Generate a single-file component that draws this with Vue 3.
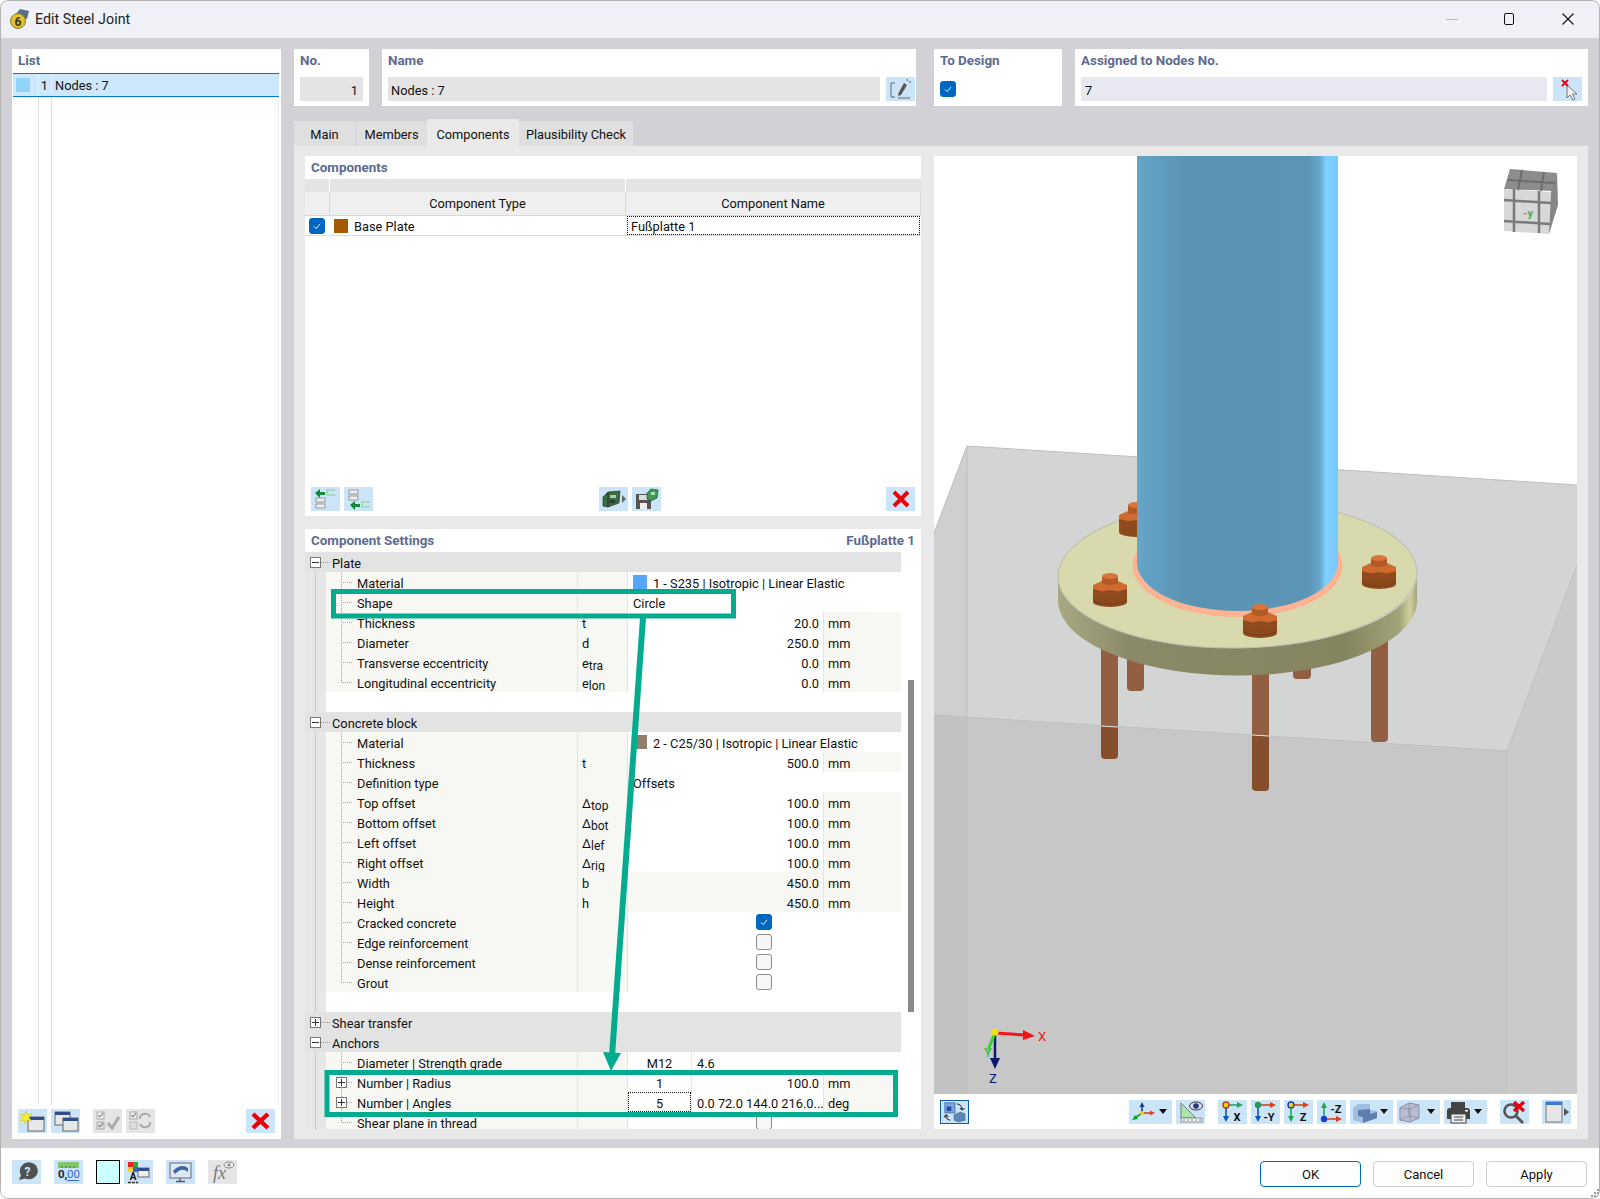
<script setup>
const g = (label, open) => ({ kind: 'group', label, open })
const blank = { kind: 'blank' }
const text = (label, value, swatch, last) => ({ kind: 'text', label, value, swatch, last })
const num = (label, sym, sub, value, tint, last) => ({ kind: 'num', label, sym, sub, value, tint, last, unit: 'mm' })
const chk = (label, on, last) => ({ kind: 'check', label, on, last })

const rows = [
  g('Plate', true),
  text('Material', '1 - S235 | Isotropic | Linear Elastic', '#56a7fb'),
  text('Shape', 'Circle'),
  num('Thickness', 't', '', '20.0'),
  num('Diameter', 'd', '', '250.0'),
  num('Transverse eccentricity', 'e', 'tra', '0.0'),
  num('Longitudinal eccentricity', 'e', 'lon', '0.0', false, true),
  blank,
  g('Concrete block', true),
  text('Material', '2 - C25/30 | Isotropic | Linear Elastic', '#8f7f6c'),
  num('Thickness', 't', '', '500.0'),
  text('Definition type', 'Offsets'),
  num('Top offset', 'Δ', 'top', '100.0'),
  num('Bottom offset', 'Δ', 'bot', '100.0'),
  num('Left offset', 'Δ', 'lef', '100.0'),
  num('Right offset', 'Δ', 'rig', '100.0'),
  num('Width', 'b', '', '450.0', true),
  num('Height', 'h', '', '450.0', true),
  chk('Cracked concrete', true),
  chk('Edge reinforcement', false),
  chk('Dense reinforcement', false),
  chk('Grout', false, true),
  blank,
  g('Shear transfer', false),
  g('Anchors', true),
  { kind: 'pair', label: 'Diameter | Strength grade', v1: 'M12', v2: '4.6', left: true },
  { kind: 'pair', label: 'Number | Radius', v1: '1', v2: '100.0', unit: 'mm', plus: true },
  { kind: 'pair', label: 'Number | Angles', v1: '5', v2: '0.0 72.0 144.0 216.0...', unit: 'deg', plus: true, focus: true, left: true },
  chk('Shear plane in thread', false, true)
]

const nuts = [
  { x: 1110, y: 573 },
  { x: 1260, y: 604 },
  { x: 1379, y: 555 }
]
</script>

<template>
  <div class="window">
    <header class="titlebar">
      <svg class="appicon" width="22" height="22" viewBox="0 0 22 22">
        <path d="M5 8 L11 1 L20 3 L18 11 Z" fill="#5a6e8c" />
        <circle cx="9" cy="13" r="7.5" fill="#e5c02c" stroke="#8a7a3a" />
        <text x="9" y="17.5" text-anchor="middle" class="ic-bold" font-size="12" fill="#3a3a20">6</text>
      </svg>
      <span class="title">Edit Steel Joint</span>
      <div class="winctl">
        <span class="minimize"></span>
        <span class="maximize"></span>
        <svg width="12" height="12" viewBox="0 0 12 12"><path d="M0.5 0.5 L11.5 11.5 M11.5 0.5 L0.5 11.5" stroke="#111" stroke-width="1.1" /></svg>
      </div>
    </header>

    <main class="content">
      <aside class="listpanel">
        <div class="plabel">List</div>
        <div class="listrow">
          <span class="listswatch"></span>
          <span class="listno">1</span>
          <span class="listtext">Nodes : 7</span>
        </div>
        <div class="listbody"></div>
        <div class="listtools">
          <button class="tb">
            <svg viewBox="0 0 29 24"><rect x="10" y="8" width="16" height="14" fill="#e8e8e8" stroke="#666" /><rect x="10" y="8" width="16" height="3" fill="#2f4c8c" /><path d="M8 2 L9.5 6 L14 5 L11 8.5 L13.5 12 L9 11 L7 15 L6 11 L2 12 L4.5 8.5 L2 5 L6.5 6 Z" fill="#f6ee30" stroke="#c9b820" stroke-width=".5" /></svg>
          </button>
          <button class="tb">
            <svg viewBox="0 0 29 24"><rect x="4" y="3" width="15" height="13" fill="#e8e8e8" stroke="#666" /><rect x="4" y="3" width="15" height="3" fill="#2f4c8c" /><rect x="12" y="9" width="15" height="13" fill="#e8e8e8" stroke="#666" /><rect x="12" y="9" width="15" height="3" fill="#2f4c8c" /></svg>
          </button>
          <button class="tb dis m13">
            <svg viewBox="0 0 29 24"><rect x="4" y="3" width="7" height="7" fill="#eee" stroke="#aaa" /><rect x="4" y="13" width="7" height="7" fill="#ddd" stroke="#aaa" /><path d="M5.5 6 L7 8 L10 4 M5.5 16 L7 18 L10 14" stroke="#666" fill="none" /><path d="M15 14 L19 19 L26 8" stroke="#aaa" stroke-width="3" fill="none" /></svg>
          </button>
          <button class="tb dis">
            <svg viewBox="0 0 29 24"><rect x="4" y="3" width="7" height="7" fill="#eee" stroke="#aaa" /><rect x="4" y="13" width="7" height="7" fill="#ddd" stroke="#bbb" /><path d="M5.5 6 L7 8 L10 4" stroke="#666" fill="none" /><path d="M14 10 A5 4 0 0 1 24 8 M24 13 A5 4 0 0 1 14 15" stroke="#aaa" stroke-width="2" fill="none" /></svg>
          </button>
          <span class="flex1"></span>
          <button class="tb">
            <svg viewBox="0 0 29 24"><path d="M7 5 L22 19 M22 5 L7 19" stroke="#e8000c" stroke-width="4.4" /></svg>
          </button>
        </div>
      </aside>

      <section class="rightcol">
        <div class="toprow">
          <div class="pbox w-no">
            <div class="plabel">No.</div>
            <div class="field gray right">1</div>
          </div>
          <div class="pbox w-name">
            <div class="plabel">Name</div>
            <div class="fieldrow namerow">
              <div class="field gray grow">Nodes : 7</div>
              <button class="tb">
                <svg viewBox="0 0 29 24"><path d="M9 6 H5 V20 H9 M12 21 H24" stroke="#666" fill="none" /><path d="M18 6 L21 8 L15 18 L12 19 L12.5 16 Z" fill="#555" /><path d="M21 2 L21.5 4 M23 5 L25 5" stroke="#555" /></svg>
              </button>
            </div>
          </div>
          <div class="pbox w-design">
            <div class="plabel">To Design</div>
            <span class="check on designchk"><svg viewBox="0 0 16 16"><path d="M4.5 8.5 L7 11 L11.5 5.5" stroke="#fff" fill="none" /></svg></span>
          </div>
          <div class="pbox w-assigned">
            <div class="plabel">Assigned to Nodes No.</div>
            <div class="fieldrow">
              <div class="field lav grow">7</div>
              <button class="tb">
                <svg viewBox="0 0 29 24"><path d="M12 9 L12 22 L15 19 L18 24 L20 23 L17.5 18 L22 18 Z" fill="#eee" stroke="#777" transform="translate(2 -1)" /><path d="M9 3 L15 9 M15 3 L9 9" stroke="#e8000c" stroke-width="1.8" /></svg>
              </button>
            </div>
          </div>
        </div>

        <nav class="tabs">
          <span class="tab t1">Main</span>
          <span class="tab t2">Members</span>
          <span class="tab t3 active">Components</span>
          <span class="tab t4">Plausibility Check</span>
        </nav>

        <div class="tabbody">
          <div class="leftstack">
            <section class="comps">
              <div class="plabel">Components</div>
              <div class="band"><i class="c1"></i><i class="c2"></i><i class="c3"></i></div>
              <div class="thead">
                <span class="c1"></span>
                <span class="c2">Component Type</span>
                <span class="c3">Component Name</span>
              </div>
              <div class="trow">
                <span class="c1 center chkcell"><span class="check on"><svg viewBox="0 0 16 16"><path d="M4.5 8.5 L7 11 L11.5 5.5" stroke="#fff" fill="none" /></svg></span></span>
                <span class="c2 typecell"><i class="compswatch"></i><span class="typetext">Base Plate</span></span>
                <span class="c3 namecell">Fußplatte 1</span>
              </div>
              <div class="flex1"></div>
              <div class="comptools">
                <button class="tb">
                  <svg viewBox="0 0 29 24"><rect x="5" y="11" width="9" height="4" fill="#eee" stroke="#999" /><rect x="5" y="17" width="9" height="4" fill="#eee" stroke="#999" /><path d="M4 6 L9 2 V5 H14 V8 H9 V11 Z" fill="#0f8a3c" /><path d="M24 3 H16 V8 H24" stroke="#9ad6b0" stroke-width="1.5" fill="none" /></svg>
                </button>
                <button class="tb">
                  <svg viewBox="0 0 29 24"><rect x="5" y="3" width="9" height="4" fill="#eee" stroke="#999" /><rect x="5" y="9" width="9" height="4" fill="#eee" stroke="#999" /><path d="M6 18 L11 14 V17 H16 V20 H11 V23 Z" fill="#0f8a3c" /><path d="M26 15 H18 V20 H26" stroke="#9ad6b0" stroke-width="1.5" fill="none" /></svg>
                </button>
                <span class="flex1"></span>
                <button class="tb">
                  <svg viewBox="0 0 29 24"><path d="M4 10 L9 5 L21 4 L20 16 L9 20 L4 19 Z" fill="#3a6a42" stroke="#2b3a2e" stroke-width=".7" /><path d="M9 5 L9 20" stroke="#1f2a20" /><rect x="11" y="8" width="6" height="3" fill="#9fd4a9" /><rect x="11" y="13" width="5" height="3" fill="#2b3a2e" /><path d="M23 8 L27 12 L23 16 Z" fill="#666" /></svg>
                </button>
                <button class="tb">
                  <svg viewBox="0 0 29 24"><path d="M4 7 H19 V22 H4 Z" fill="#555" /><rect x="7" y="8" width="9" height="5" fill="#ddd" /><rect x="8" y="16" width="7" height="6" fill="#eee" /><path d="M15 6 L19 2 L26 3 L25 11 L19 14 L15 12 Z" fill="#3e9a50" stroke="#234" stroke-width=".6" /><rect x="19" y="5" width="4" height="3" fill="#a9dcb4" /></svg>
                </button>
                <span class="flex1"></span>
                <button class="tb">
                  <svg viewBox="0 0 29 24"><path d="M8 5 L22 19 M22 5 L8 19" stroke="#e8000c" stroke-width="4" /></svg>
                </button>
              </div>
            </section>

            <section class="settings">
              <div class="sethead">
                <span class="plabel flush">Component Settings</span>
                <span class="plabel flush">Fußplatte 1</span>
              </div>
              <div class="setbody">
                <div class="grid">
                  <div v-for="(row, i) in rows" :key="i" class="row" :class="'k-' + row.kind">
                    <template v-if="row.kind === 'group'">
                      <span class="gut"><i class="box" :class="{ closed: !row.open }"></i></span>
                      <span class="grouplabel"><i class="dash"></i>{{ row.label }}</span>
                    </template>
                    <template v-else-if="row.kind === 'blank'">
                      <span class="gut"></span>
                    </template>
                    <template v-else>
                      <span class="gut"></span>
                      <span class="name">
                        <i class="twig" :class="{ last: row.last, plus: row.plus }"><i v-if="row.plus" class="box closed"></i></i>
                        {{ row.label }}
                      </span>
                      <span class="sym">{{ row.sym }}<small v-if="row.sub">{{ row.sub }}</small></span>
                      <span v-if="row.kind === 'text'" class="val">
                        <i v-if="row.swatch" class="matswatch" :style="{ background: row.swatch }"></i>{{ row.value }}
                      </span>
                      <template v-if="row.kind === 'num'">
                        <span class="numv" :class="{ tint: row.tint }">{{ row.value }}</span>
                        <span class="unit">{{ row.unit }}</span>
                      </template>
                      <span v-if="row.kind === 'check'" class="val center">
                        <span class="check" :class="{ on: row.on }"><svg v-if="row.on" viewBox="0 0 16 16"><path d="M4.5 8.5 L7 11 L11.5 5.5" stroke="#fff" fill="none" /></svg></span>
                      </span>
                      <template v-if="row.kind === 'pair'">
                        <span class="v1" :class="{ focus: row.focus }">{{ row.v1 }}</span>
                        <span class="v2" :class="{ lefted: row.left }">{{ row.v2 }}</span>
                        <span class="unit" :class="{ plain: !row.unit }">{{ row.unit }}</span>
                      </template>
                    </template>
                  </div>
                </div>
                <div class="scroll"><i></i></div>
              </div>
            </section>
          </div>

          <section class="viewer">
            <svg class="scene" viewBox="934 156 643 938" preserveAspectRatio="none">
              <defs>
                <linearGradient id="col" x1="0" x2="1" y1="0" y2="0">
                  <stop offset="0" stop-color="#66a5c8" />
                  <stop offset=".12" stop-color="#5f9cbd" />
                  <stop offset=".25" stop-color="#5a93b2" />
                  <stop offset=".85" stop-color="#5b94b4" />
                  <stop offset=".91" stop-color="#66a6cc" />
                  <stop offset=".94" stop-color="#7fd0ff" />
                  <stop offset="1" stop-color="#78c8fa" />
                </linearGradient>
                <linearGradient id="side" x1="0" x2="1" y1="0" y2="0">
                  <stop offset="0" stop-color="#a8a983" />
                  <stop offset=".2" stop-color="#8a8a68" />
                  <stop offset=".8" stop-color="#84845f" />
                  <stop offset=".95" stop-color="#a3a37a" />
                  <stop offset=".98" stop-color="#cfcf9f" />
                  <stop offset="1" stop-color="#a5a57d" />
                </linearGradient>
              </defs>
              <rect x="934" y="156" width="643" height="938" fill="#fff" />
              <polygon points="967,446 1577,485 1577,565 1507,751 934,715 934,533" fill="#d3d5d5" />
              <polygon points="967,446 934,533 934,715 967,717" fill="#cdcfd0" />
              <polygon points="934,715 1507,751 1507,1094 934,1094" fill="#c7c7c7" />
              <polygon points="934,715 967,717 967,1094 934,1094" fill="#c2c2c2" />
              <polygon points="1507,751 1577,565 1577,1094 1507,1094" fill="#cacaca" />
              <path d="M967 446 L1577 485 M967 446 L934 533 M934 715 L1507 751 L1577 565 M1507 751 V1094 M967 446 V1094" stroke="#bdbfbf" stroke-width="1" fill="none" />

              <g>
                <rect x="1127" y="650" width="17" height="41" rx="4" fill="#925f42" />
                <rect x="1293" y="650" width="18" height="29" rx="4" fill="#925f42" />
                <rect x="1371" y="630" width="17" height="112" rx="4" fill="#925f42" />
                <rect x="1101" y="640" width="17" height="119" rx="4" fill="#854f2d" />
                <polygon points="1101,640 1118,640 1118,727 1101,726" fill="#925f42" />
                <rect x="1252" y="660" width="17" height="131" rx="4" fill="#854f2d" />
                <polygon points="1252,660 1269,660 1269,736 1252,735" fill="#925f42" />
                <path d="M1101 726 L1118 727 M1252 735 L1269 736" stroke="#e4e4e4" stroke-width="1" />
              </g>

              <path d="M1058 577 A179.5 73 0 0 0 1417 572 V598 A179.5 75 0 0 1 1058 603 Z" fill="url(#side)" />
              <ellipse cx="1237.5" cy="574.5" rx="179.5" ry="73.5" fill="#d8d9ad" stroke="#bcbdb0" transform="rotate(-0.8 1237.5 574.5)" />

              <g transform="translate(1136 503)">
                <rect x="-17" y="15" width="34" height="14" fill="#8f4b1e" />
                <ellipse cx="0" cy="29" rx="17" ry="5" fill="#8c4a1c" />
                <polygon points="-17,12 -8,8 8,8 17,12 17,16 8,18 0,17 -8,18 -17,16" fill="#cf6a30" />
                <rect x="-8" y="2" width="16" height="9" fill="#b25a26" />
                <ellipse cx="0" cy="2" rx="8" ry="3" fill="#d9743a" />
              </g>

              <ellipse cx="1237.5" cy="566" rx="105" ry="51" fill="#fdb392" />
              <path d="M1142 590 L1147 580 M1172 606 L1177 598 M1205 615 L1206 607 M1246 617 V609 M1299 608 L1296 600 M1329 592 L1324 584" stroke="#e3c9bb" stroke-width="1" />
              <path d="M1137 156 V563 A100.5 48 0 0 0 1338 563 V156 Z" fill="url(#col)" />

              <g v-for="n in nuts" :key="n.x" :transform="`translate(${n.x} ${n.y})`">
                <rect x="-17" y="14" width="34" height="15" fill="#8f4b1e" />
                <ellipse cx="0" cy="29" rx="17" ry="5" fill="#8c4a1c" />
                <path d="M-17 26 A17 5 0 0 0 17 26" stroke="#6f3814" fill="none" stroke-width=".8" />
                <polygon points="-17,12 -8,8 8,8 17,12 17,16 8,18.5 0,17 -8,18.5 -17,16" fill="#cf6a30" />
                <path d="M-8 9 A8 3 0 0 0 8 9 V3 H-8 Z" fill="#b25a26" />
                <ellipse cx="0" cy="3" rx="8" ry="3" fill="#d9743a" />
              </g>

              <g>
                <polygon points="1510,169 1557,173 1553,191 1504,189" fill="#8c8c8c" />
                <polygon points="1504,189 1551,192 1549,234 1504,231" fill="#d8d8d8" />
                <polygon points="1551,192 1557,173 1558,205 1549,234" fill="#868686" />
                <path d="M1514 189 V232 M1539 191 V233 M1504 200 L1551 203 M1504 221 L1550 224" stroke="#7a7a7a" stroke-width="2.5" fill="none" />
                <path d="M1508 180 L1555 183 M1522 170 L1518 190 M1544 172 L1541 191" stroke="#6c6c6c" stroke-width="1.8" fill="none" />
                <text x="1528" y="217" text-anchor="middle" font-size="11" class="ic-bold" fill="#46b04a">-y</text>
              </g>

              <g>
                <path d="M995 1032 V1060" stroke="#0c1a6e" stroke-width="2.5" />
                <polygon points="990,1058 1000,1058 995,1069" fill="#0c1a6e" />
                <path d="M995 1033 L988 1050" stroke="#35d52e" stroke-width="3" />
                <path d="M996 1033 L1025 1035" stroke="#f0141c" stroke-width="3" />
                <polygon points="1023,1030 1035,1036 1023,1040" fill="#f0141c" />
                <circle cx="995" cy="1032" r="3.5" fill="#ede11d" />
                <text x="1038" y="1041" font-size="13" class="ic-reg" fill="#f0141c">X</text>
                <text x="984" y="1057" font-size="13" class="ic-reg" fill="#22c11f">Y</text>
                <text x="989" y="1083" font-size="13" class="ic-reg" fill="#0c1a6e">Z</text>
              </g>
            </svg>

            <div class="viewtools">
              <button class="tb toggled">
                <svg viewBox="0 0 29 24"><rect x="4" y="2" width="11" height="11" fill="#7aa4e2" stroke="#4a74b8" /><rect x="6" y="6" width="5" height="5" fill="#234a94" /><path d="M17 3 A7 7 0 0 1 23 10 M23 10 L20.5 7.5 M23 10 L25.5 8 M5 15 A6 6 0 0 0 10 21 M5 15 L3 18 M5 15 L8 17" stroke="#333" stroke-width="1.2" fill="none" /><path d="M14 15 L21 12 L26 14 V21 L19 23 L14 21 Z" fill="#5e86b4" stroke="#3a5a88" stroke-width=".5" /></svg>
              </button>
              <span class="flex1"></span>
              <button class="tb wide">
                <svg viewBox="0 0 43 24"><path d="M13 13 V4" stroke="#0f3fb0" stroke-width="1.6" /><polygon points="10.5,7 15.5,7 13,2" fill="#0f3fb0" /><path d="M13 13 H23" stroke="#d8431a" stroke-width="1.6" /><polygon points="21,10.5 21,15.5 26,13" fill="#d8431a" /><path d="M13 13 L6 18" stroke="#169a30" stroke-width="1.6" /><polygon points="3,20 9,19 6,15" fill="#169a30" /><circle cx="13" cy="13" r="2" fill="#e8d21c" /><polygon points="30,9 38,9 34,14" fill="#111" /></svg>
              </button>
              <button class="tb ml4">
                <svg viewBox="0 0 29 24"><polygon points="5,3 5,18 20,18" fill="#a9e6a8" stroke="#777" /><rect x="5" y="18" width="21" height="4" fill="#eee" stroke="#777" stroke-width=".7" /><path d="M8 21 V19 M12 21 V19 M16 21 V19 M20 21 V19 M24 21 V19" stroke="#777" stroke-width=".7" /><ellipse cx="20" cy="6" rx="6.5" ry="4" fill="#dde" stroke="#334" /><circle cx="20" cy="6" r="2.8" fill="#2a3a78" /></svg>
              </button>
              <button class="tb ml13">
                <svg viewBox="0 0 29 24"><circle cx="8" cy="5" r="3" fill="#e8d21c" stroke="#c43a1a" stroke-width="1.4" /><path d="M11 5 H20" stroke="#1ea65a" stroke-width="1.6" /><polygon points="19,2 19,8 25,5" fill="#1ea65a" /><path d="M8 8 V18" stroke="#0f52c0" stroke-width="1.6" /><polygon points="5,16 11,16 8,22" fill="#0f52c0" /><text x="19" y="21" font-size="11" class="ic-bold" text-anchor="middle" fill="#111">X</text></svg>
              </button>
              <button class="tb ml4">
                <svg viewBox="0 0 29 24"><circle cx="7" cy="5" r="3.2" fill="#1f9a50" /><path d="M10 5 H20" stroke="#d8431a" stroke-width="1.6" /><polygon points="19,2 19,8 25,5" fill="#d8431a" /><path d="M7 8 V18" stroke="#0f52c0" stroke-width="1.6" /><polygon points="4,16 10,16 7,22" fill="#0f52c0" /><text x="18" y="21" font-size="11" class="ic-bold" text-anchor="middle" fill="#111">-Y</text></svg>
              </button>
              <button class="tb ml4">
                <svg viewBox="0 0 29 24"><circle cx="7" cy="5" r="3" fill="#e8d21c" stroke="#1240c0" stroke-width="1.4" /><path d="M10 5 H20" stroke="#d8431a" stroke-width="1.6" /><polygon points="19,2 19,8 25,5" fill="#d8431a" /><path d="M7 8 V18" stroke="#1ea65a" stroke-width="1.6" /><polygon points="4,16 10,16 7,22" fill="#1ea65a" /><text x="19" y="21" font-size="11" class="ic-bold" text-anchor="middle" fill="#111">Z</text></svg>
              </button>
              <button class="tb ml4">
                <svg viewBox="0 0 29 24"><circle cx="7" cy="19" r="3.2" fill="#0f42d0" /><path d="M10 19 H20" stroke="#d8431a" stroke-width="1.6" /><polygon points="19,16 19,22 25,19" fill="#d8431a" /><path d="M7 16 V7" stroke="#1ea65a" stroke-width="1.6" /><polygon points="4,8 10,8 7,2" fill="#1ea65a" /><text x="19" y="13" font-size="11" class="ic-bold" text-anchor="middle" fill="#111">-Z</text></svg>
              </button>
              <button class="tb wide ml4">
                <svg viewBox="0 0 43 24"><path d="M3 8 L8 4 L20 4 V10 L27 11 V18 L13 23 L3 20 Z" fill="#9cbfe2" /><path d="M8 10 L20 9 V14 L27 12 V18 L13 23 V17 L8 16 Z" fill="#5e7fae" /><polygon points="30,9 38,9 34,14" fill="#111" /></svg>
              </button>
              <button class="tb wide ml4">
                <svg viewBox="0 0 43 24"><path d="M3 8 L12 3 L22 5 V18 L13 22 L3 20 Z" fill="#b9bdd2" stroke="#8a8fa8" /><path d="M3 8 L13 9 L22 5 M13 9 V22 M3 20 L12 16 L22 18 M12 3 V16" stroke="#8a8fa8" fill="none" stroke-width=".8" /><polygon points="30,9 38,9 34,14" fill="#111" /></svg>
              </button>
              <button class="tb wide ml4">
                <svg viewBox="0 0 43 24"><rect x="7" y="2" width="14" height="6" fill="#444" /><path d="M3 11 A3 3 0 0 1 6 8 H23 A3 3 0 0 1 26 11 V19 H3 Z" fill="#444" /><rect x="7" y="14" width="15" height="9" fill="#eee" stroke="#444" /><path d="M10 17 H19 M10 20 H19" stroke="#444" /><rect x="21" y="10" width="3" height="1.5" fill="#fff" /><polygon points="30,9 38,9 34,14" fill="#111" /></svg>
              </button>
              <button class="tb ml13">
                <svg viewBox="0 0 29 24"><circle cx="11" cy="11" r="6.5" fill="none" stroke="#555" stroke-width="2.6" /><path d="M16 16 L23 23" stroke="#555" stroke-width="2.8" /><path d="M14 2 L24 11 M24 2 L14 11" stroke="#e8000c" stroke-width="3.4" /></svg>
              </button>
              <button class="tb ml13">
                <svg viewBox="0 0 29 24"><rect x="4" y="2" width="16" height="20" fill="#e6e6e6" stroke="#777" /><rect x="4" y="2" width="16" height="3" fill="#3c78d8" /><polygon points="22,8 27,12 22,16" fill="#555" /></svg>
              </button>
            </div>
          </section>
        </div>
      </section>
    </main>

    <footer class="footer">
      <button class="tb">
        <svg viewBox="0 0 29 24"><path d="M7 20 L9 15 A9 8.5 0 1 1 13 18.5 Z" fill="#505050" /><text x="15.5" y="15.5" text-anchor="middle" font-size="12" class="ic-bold" fill="#cce4f7">?</text></svg>
      </button>
      <button class="tb ml13">
        <svg viewBox="0 0 29 24"><rect x="4" y="2" width="21" height="6" fill="#84c46a" /><path d="M8 6 V8 M12 6 V8 M16 6 V8 M20 6 V8" stroke="#3c7c30" /><text x="4" y="18" font-size="11.5" class="ic-bold" fill="#222">0,</text><text x="13" y="18" font-size="11.5" class="ic-reg" fill="#3a66d8">00</text><path d="M13 20.5 H25" stroke="#3a66d8" /></svg>
      </button>
      <span class="colorbox"></span>
      <button class="tb ml4">
        <svg viewBox="0 0 29 24"><rect x="4" y="2" width="5" height="5" fill="#e22" /><rect x="9" y="2" width="5" height="5" fill="#3a3" /><rect x="4" y="7" width="5" height="5" fill="#fc3" /><rect x="9" y="7" width="5" height="5" fill="#36c" /><text x="9" y="20" text-anchor="middle" font-size="10" class="ic-bold" fill="#111">A</text><path d="M4 22.5 H14" stroke="#333" stroke-width="1.4" stroke-dasharray="3 1" /><rect x="14" y="8" width="11" height="9" fill="#eee" stroke="#666" /><rect x="14" y="8" width="11" height="3" fill="#2f4c8c" /></svg>
      </button>
      <button class="tb ml13">
        <svg viewBox="0 0 29 24"><rect x="4" y="3" width="21" height="15" fill="#dfe8f2" stroke="#667" /><path d="M7 11 C12 5 18 5 22 8 L22 12 C17 8 13 10 9 14 Z" fill="#3c66a8" /><path d="M14 18 V21 M10 21.5 H19" stroke="#556" stroke-width="1.4" /></svg>
      </button>
      <button class="tb dis ml13">
        <svg viewBox="0 0 29 24"><text x="5" y="19" font-size="18" font-style="italic" font-family="Liberation Serif, serif" fill="#777">fx</text><ellipse cx="21" cy="5" rx="5" ry="3" fill="#eee" stroke="#888" /><circle cx="21" cy="5" r="1.6" fill="#888" /></svg>
      </button>
      <span class="flex1"></span>
      <button class="btn primary">OK</button>
      <button class="btn">Cancel</button>
      <button class="btn">Apply</button>
      <svg class="grip" width="10" height="10" viewBox="0 0 10 10"><path d="M8 1 h2 v2 h-2z M5 4 h2 v2 h-2z M8 4 h2 v2 h-2z M2 7 h2 v2 h-2z M5 7 h2 v2 h-2z M8 7 h2 v2 h-2z" fill="#999" /></svg>
    </footer>

    <svg class="annot" width="1600" height="1199" viewBox="0 0 1600 1199">
      <rect x="333.5" y="591.5" width="400" height="24.5" fill="none" stroke="#05ab8e" stroke-width="5" />
      <rect x="327" y="1072.5" width="568.5" height="42" fill="none" stroke="#05ab8e" stroke-width="5" />
      <path d="M643 618 L612 1056" stroke="#05ab8e" stroke-width="6" fill="none" />
      <polygon points="603,1052 621,1053 611,1071" fill="#05ab8e" />
    </svg>
  </div>
</template>

<style>
html, body { margin: 0; background: #fff; }
</style>

<style scoped>
.window {
  width: 1600px;
  height: 1199px;
  position: relative;
  display: flex;
  flex-direction: column;
  overflow: hidden;
  border-radius: 8px;
  background: #d1d1d6;
  color: #111;
  font: 12.8px/20px Roboto, "Liberation Sans", sans-serif;
}
.window::after {
  content: "";
  position: absolute;
  inset: 0;
  border: 1px solid #b4b4b4;
  border-radius: 8px;
  pointer-events: none;
}
.titlebar {
  height: 38px;
  flex: none;
  background: #f0f1f7;
  display: flex;
  align-items: center;
  padding-left: 9px;
}
.appicon { margin-right: 4px; }
.title { font-size: 14.3px; color: #222; }
.winctl { margin-left: auto; display: flex; align-items: center; width: 128px; height: 14px; margin-right: 26px; justify-content: space-between; }
.minimize { width: 12px; height: 1px; background: #bbb; }
.maximize { width: 10px; height: 12px; border: 1.2px solid #111; border-radius: 2px; box-sizing: border-box; margin-right: 2px; }

.content { flex: 1; display: flex; gap: 13px; padding: 11px 12px 9px; min-height: 0; }
.listpanel { width: 269px; flex: none; background: #fff; display: flex; flex-direction: column; }
.plabel { font-weight: 700; font-size: 13.4px; color: #5d6a91; padding: 0 6px; line-height: 24px; height: 24px; }
.plabel.flush { padding: 0; height: auto; }
.listrow {
  margin: 0 2px 0 1px; height: 24px; box-sizing: border-box;
  background:
    linear-gradient(#e6f2fb, #e6f2fb) 25px 0 / 1px 100% no-repeat,
    linear-gradient(#e6f2fb, #e6f2fb) 38px 0 / 1px 100% no-repeat,
    #cde8fd;
  border-top: 1px solid #0078d4; border-bottom: 1px solid #0078d4;
  display: flex; align-items: center;
}
.listswatch { width: 14px; height: 14px; background: #90d5f6; margin-left: 3px; }
.listno { width: 18px; text-align: right; margin-right: 7px; padding-top: 2px; }
.listtext { padding-top: 2px; }
.listbody {
  flex: 1;
  margin: 0 2px 4px 1px;
  background:
    linear-gradient(#dfdfdf, #dfdfdf) 25px 0 / 1px 100% no-repeat,
    linear-gradient(#dfdfdf, #dfdfdf) 38px 0 / 1px 100% no-repeat;
  border-right: 1px solid #ececec;
}
.listtools { display: flex; gap: 4px; padding: 0 6px 6px; }
.flex1 { flex: 1; }
.m13 { margin-left: 9px; }
.ml4 { margin-left: 4px; }
.ml13 { margin-left: 13px; }

.tb {
  width: 29px; height: 24px; padding: 0; border: 0; flex: none;
  background: #cce4f7; display: block;
}
.tb svg { width: 100%; height: 100%; display: block; }
.tb.wide { width: 43px; }
.tb.dis { background: #e5e5e5; }
.tb.toggled { border: 1px solid #0d5aa7; box-sizing: border-box; }

.rightcol { flex: 1; min-width: 0; display: flex; flex-direction: column; }
.toprow { display: flex; height: 57px; flex: none; }
.pbox { background: #fff; box-sizing: border-box; padding: 0 0 0; }
.w-no { width: 75px; }
.w-name { width: 534px; margin-left: 13px; }
.w-design { width: 128px; margin-left: 18px; }
.w-assigned { width: 513px; margin-left: 13px; }
.pbox .plabel { height: 28px; line-height: 24px; }
.field { height: 24px; line-height: 27px; box-sizing: border-box; padding: 0 3px; }
.w-no .field { margin: 0 6px; padding: 0 5px; }
.field.gray { background: #e4e4e4; }
.field.lav { background: #e8e8f0; padding-left: 4px; }
.field.right { text-align: right; }
.fieldrow { display: flex; gap: 6px; padding: 0 6px; }
.namerow { padding-right: 1px; }
.grow { flex: 1; }

.check {
  display: block; width: 16px; height: 16px; box-sizing: border-box;
  border: 1px solid #8a8a8a; border-radius: 3px; background: #f7f7f7;
}
.check.on { background: #0067c0; border-color: #0067c0; }
.check svg { display: block; width: 14px; height: 14px; }
.designchk { margin: 4px 0 0 6px; }

.tabs { height: 27px; margin-top: 13px; flex: none; display: flex; align-items: flex-end; }
.tab { height: 25px; line-height: 28px; text-align: center; background: #dfdfe0; box-sizing: border-box; }
.t1 { width: 61px; margin-right: 1px; }
.t2 { width: 71px; }
.t3 { width: 92px; }
.t4 { width: 114px; }
.tab.active { height: 27px; line-height: 32px; background: #e9e9e9; }

.tabbody { flex: 1; min-height: 0; background: #e9e9e9; display: flex; gap: 13px; padding: 10px 11px; }
.leftstack { width: 616px; flex: none; display: flex; flex-direction: column; gap: 13px; }
.comps { height: 360px; flex: none; background: #fff; display: flex; flex-direction: column; }
.comps .plabel { height: 23px; flex: none; }
.band { display: flex; height: 13px; background: #e4e4e4; flex: none; }
.band i { display: block; border-right: 1px solid #fff; box-sizing: border-box; }
.c1 { width: 25px; flex: none; }
.c2 { width: 296px; flex: none; }
.c3 { flex: 1; }
.band .c3 { border: 0; }
.thead { display: flex; height: 24px; background: #efefef; line-height: 24px; text-align: center; flex: none; border-bottom: 1px solid #d8d8d8; box-sizing: border-box; }
.thead span { border-right: 1px solid #d8d8d8; box-sizing: border-box; }
.trow { display: flex; height: 20px; border-bottom: 1px solid #dcdcdc; flex: none; box-sizing: border-box; align-items: center; }
.center { display: flex; justify-content: center; align-items: center; }
.chkcell { padding-right: 2px; box-sizing: border-box; }
.typecell { display: flex; align-items: center; }
.typetext { padding-top: 2px; }
.compswatch { width: 14px; height: 14px; margin: 0 6px 0 4px; background: #a65a00; }
.namecell { height: 19px; line-height: 20px; box-sizing: border-box; border: 1px dotted #111; padding-left: 3px; margin-left: 1px; margin-right: 1px; }
.comptools { display: flex; gap: 4px; padding: 0 6px 5px; flex: none; }

.settings { flex: 1; min-height: 0; background: #fff; display: flex; flex-direction: column; }
.sethead { height: 23px; flex: none; display: flex; justify-content: space-between; padding: 0 6px; line-height: 24px; }
.setbody { flex: 1; min-height: 0; display: flex; overflow: hidden; }
.grid {
  width: 596px; flex: none; overflow: hidden;
  background: repeating-linear-gradient(180deg, #a9a9a9 0 1px, transparent 1px 2px) 10px 0 / 1px 100% no-repeat;
}
.scroll { flex: 1; padding-top: 128px; }
.scroll i { display: block; width: 6px; height: 332px; background: #8a8a8a; margin-left: 7px; }
.row { height: 20px; line-height: 24px; display: grid; grid-template-columns: 21px 251px 51px 63px 132px 78px; grid-template-rows: 20px; position: relative; }
.gut { background: repeating-linear-gradient(180deg, #a9a9a9 0 1px, transparent 1px 2px) 10px 0 / 1px 100% no-repeat, #e7e7e7; display: flex; align-items: center; }
.box {
  display: block; width: 11px; height: 11px; box-sizing: border-box; border: 1px solid #777; background:
    linear-gradient(#333, #333) center / 7px 1px no-repeat, #fff;
  margin-left: 5px; flex: none;
}
.box.closed {
  background:
    linear-gradient(#333, #333) center / 7px 1px no-repeat,
    linear-gradient(#333, #333) center / 1px 7px no-repeat, #fff;
}
.row.k-group { background: #e3e3e3; }
.row.k-group .gut { background: transparent; }
.grouplabel { grid-column: 2 / 7; display: flex; align-items: flex-start; background: #e3e3e3; }
.dash {
  width: 9px; height: 1px; margin-right: 2px; margin-left: -5px; align-self: center;
  background: repeating-linear-gradient(90deg, #999 0 1px, transparent 1px 2px);
}
.name { background: #f7f8f3; display: flex; align-items: flex-start; white-space: nowrap; }
.twig {
  display: flex; align-items: center; align-self: stretch; width: 12px; margin: 0 4px 0 15px; flex: none;
  background:
    repeating-linear-gradient(180deg, #a9a9a9 0 1px, transparent 1px 2px) 0 0 / 1px 100% no-repeat,
    repeating-linear-gradient(90deg, #a9a9a9 0 1px, transparent 1px 2px) 0 50% / 100% 1px no-repeat;
}
.twig.last {
  background:
    repeating-linear-gradient(180deg, #a9a9a9 0 1px, transparent 1px 2px) 0 0 / 1px 50% no-repeat,
    repeating-linear-gradient(90deg, #a9a9a9 0 1px, transparent 1px 2px) 0 50% / 100% 1px no-repeat;
}
.twig .box { margin-left: -5px; }
.sym { background: #f7f8f3; border-left: 1px solid #e4e4e0; border-right: 1px solid #e4e4e0; box-sizing: border-box; padding-left: 4px; }
.sym small { font-size: 12px; position: relative; top: 2px; }
.val { grid-column: 4 / 7; display: flex; align-items: flex-start; padding-left: 5px; background: #fff; white-space: nowrap; }
.val.center { padding: 0 2px 0 0; justify-content: center; align-items: center; }
.matswatch { width: 14px; height: 14px; margin-right: 6px; align-self: center; }
.numv { grid-column: 4 / 6; text-align: right; padding-right: 4px; background: #fff; }
.numv.tint { background: #f7f8f3; }
.unit { background: #f7f8f3; border-left: 1px solid #e4e4e0; padding-left: 4px; box-sizing: border-box; }
.unit.plain { background: #fff; border: 0; }
.v1 { text-align: center; background: #fff; box-sizing: border-box; }
.v1.focus { border: 1px dotted #111; line-height: 21px; }
.v2 { text-align: right; padding-right: 4px; background: #fff; border-left: 1px solid #e8e8e8; white-space: nowrap; overflow: hidden; box-sizing: border-box; }
.v2.lefted { text-align: left; padding: 0 0 0 5px; }

.viewer { flex: 1; min-width: 0; display: flex; flex-direction: column; background: #fff; }
.scene { flex: 1; min-height: 0; width: 100%; display: block; }
.viewtools { height: 35px; flex: none; display: flex; align-items: center; padding: 0 6px; }

.footer { height: 51px; flex: none; background: #fff; display: flex; padding: 12px 13px 0 12px; box-sizing: border-box; align-items: flex-start; position: relative; }
.colorbox { width: 24px; height: 24px; box-sizing: border-box; border: 1px solid #000; background: #ccffff; margin-left: 13px; flex: none; }
.btn {
  width: 101px; height: 26px; margin: 1px 0 0 12px; box-sizing: border-box;
  border: 1px solid #cfcfcf; border-radius: 4px; background: #fdfdfd;
  font: 13px Roboto, "Liberation Sans", sans-serif; color: #111; padding: 0;
}
.btn.primary { border: 1.5px solid #0067c0; }
.grip { position: absolute; right: 1px; bottom: 1px; }
.annot { position: absolute; left: 0; top: 0; pointer-events: none; }
.ic-bold { font-family: Roboto, sans-serif; font-weight: 700; }
.ic-reg { font-family: Roboto, sans-serif; }
</style>
